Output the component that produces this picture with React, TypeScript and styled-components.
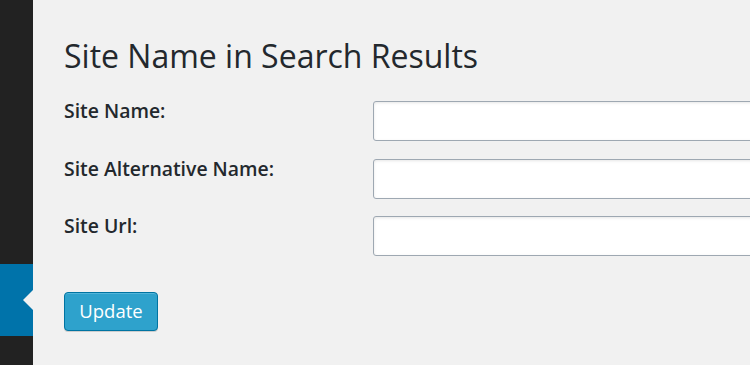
import React from "react";
import styled, { createGlobalStyle } from "styled-components";

const Global = createGlobalStyle`
  html, body { margin: 0; padding: 0; background: #f1f1f1; overflow: hidden; }
  body { font-family: "Open Sans", "Liberation Sans", sans-serif; color: #23282d; }
`;

const Page = styled.div`
  display: flex;
  width: 750px;
  height: 365px;
  overflow: hidden;
`;

const Sidebar = styled.nav`
  flex: 0 0 33px;
  display: flex;
  flex-direction: column;
  background: #222222;
`;

const MenuGap = styled.div<{ $h: number }>`
  height: ${(p) => p.$h}px;
  flex: 0 0 auto;
`;

const ActiveItem = styled.div`
  position: relative;
  height: 72px;
  background: #0073aa;
  &::after {
    content: "";
    position: absolute;
    right: 0;
    top: 50%;
    margin-top: -10px;
    border: 10px solid transparent;
    border-right-color: #f1f1f1;
    border-left-width: 0;
  }
`;

const Main = styled.main`
  flex: 1;
  padding: 35px 0 0 31px;
  min-width: 0;
`;

const Title = styled.h2`
  margin: 0;
  font-size: 32px;
  font-weight: 400;
  line-height: 1.3;
  color: #23282d;
`;

const Form = styled.form`
  display: flex;
  flex-direction: column;
  gap: 13.5px;
  margin-top: 20.5px;
`;

const Row = styled.div`
  display: grid;
  grid-template-columns: 309px 1fr;
  align-items: start;
`;

const Label = styled.label`
  font-size: 19.4px;
  font-weight: 600;
  line-height: 1.4;
  color: #23282d;
`;

const Input = styled.input`
  box-sizing: border-box;
  margin: 4px 0 0;
  width: 420px;
  height: 40px;
  border: 1px solid #9ea8b2;
  border-radius: 3px;
  background: #fff;
  box-shadow: inset 0 1px 3px rgba(0, 0, 0, 0.1);
  outline: none;
`;

const Button = styled.button`
  margin-top: 36px;
  box-sizing: border-box;
  width: 94px;
  height: 39px;
  padding: 0 0 2px;
  border: 1px solid #0074a2;
  border-radius: 4px;
  background: #2ea2cc;
  color: #fff;
  font-family: "Open Sans", "Liberation Sans", sans-serif;
  font-size: 18.5px;
  box-shadow: inset 0 1px 0 rgba(120, 200, 230, 0.5), 0 1px 0 rgba(0, 0, 0, 0.15);
  cursor: pointer;
`;

const fields = ["Site Name:", "Site Alternative Name:", "Site Url:"];

export default function App() {
  return (
    <Page>
      <Global />
      <Sidebar>
        <MenuGap $h={264} />
        <ActiveItem />
      </Sidebar>
      <Main>
        <Title>Site Name in Search Results</Title>
        <Form onSubmit={(e) => e.preventDefault()}>
          {fields.map((f) => (
            <Row key={f}>
              <Label>{f}</Label>
              <Input type="text" />
            </Row>
          ))}
        </Form>
        <Button type="button">Update</Button>
      </Main>
    </Page>
  );
}
